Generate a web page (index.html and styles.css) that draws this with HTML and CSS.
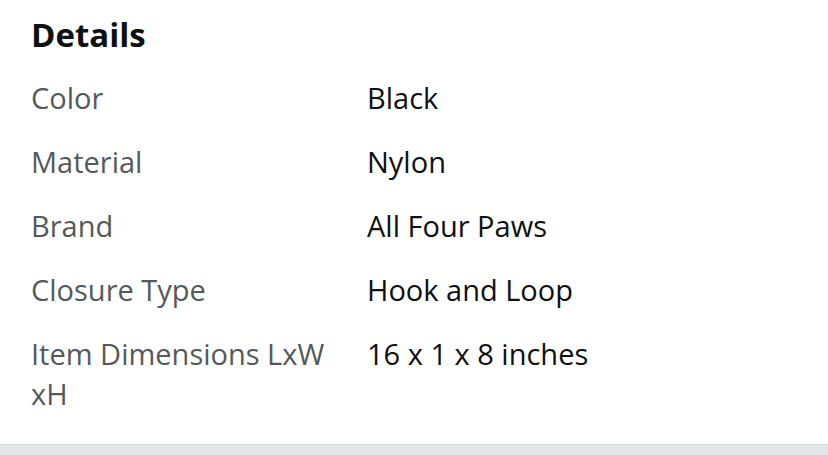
FILE: index.html
```html
<!DOCTYPE html>
<html lang="en">
<head>
<meta charset="utf-8">
<title>Details</title>
<link rel="stylesheet" href="styles.css">
</head>
<body>
<main class="page">
  <section class="details">
    <h2 class="details-title">Details</h2>
    <div class="details-table">
      <div class="row"><div class="label">Color</div><div class="value">Black</div></div>
      <div class="row"><div class="label">Material</div><div class="value">Nylon</div></div>
      <div class="row"><div class="label">Brand</div><div class="value">All Four Paws</div></div>
      <div class="row"><div class="label">Closure Type</div><div class="value">Hook and Loop</div></div>
      <div class="row"><div class="label">Item Dimensions LxW xH</div><div class="value">16 x 1 x 8 inches</div></div>
    </div>
  </section>
  <div class="divider"></div>
</main>
</body>
</html>
```

FILE: styles.css
```css
html, body {
  margin: 0;
  padding: 0;
  background: #ffffff;
}
.page {
  font-family: "Open Sans", "Noto Sans", sans-serif;
  color: #0f1111;
  width: 828px;
  height: 455px;
  overflow: hidden;
  display: flex;
  flex-direction: column;
}
.details {
  padding: 15px 31px 18px 31px;
}
.details-title {
  margin: 0 0 11px 0;
  font-size: 33px;
  line-height: 40px;
  font-weight: 700;
  color: #0f1111;
}
.details-table {
  display: flex;
  flex-direction: column;
}
.row {
  display: grid;
  grid-template-columns: 336px 1fr;
  padding: 12px 0;
  font-size: 29px;
  line-height: 40px;
}
.label {
  color: #565959;
  padding-right: 16px;
}
.value {
  color: #0f1111;
}
.divider {
  flex: 1;
  background: #e3e6e6;
  border-top: 1px solid #dadddd;
}
```
